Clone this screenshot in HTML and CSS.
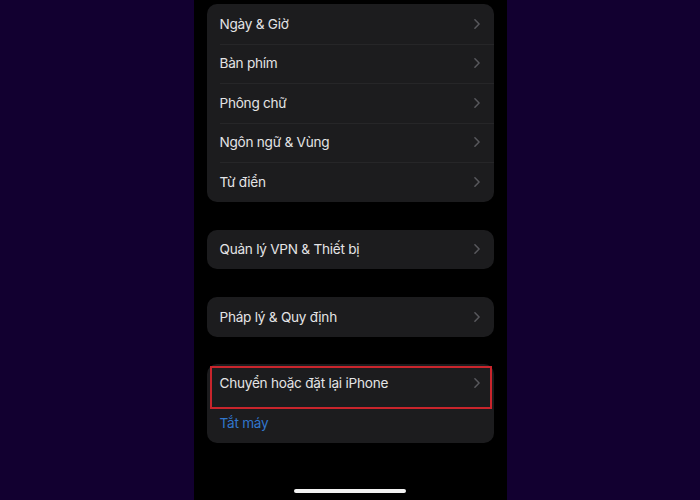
FILE: index.html
```html
<!DOCTYPE html>
<html lang="vi">
<head>
<meta charset="utf-8">
<link rel="stylesheet" href="styles.css">
</head>
<body>
<div class="phone">
  <div class="card card-first">
    <div class="row"><span class="label">Ngày &amp; Giờ</span><svg class="chev" viewBox="0 0 7 12"><path d="M1 1l5 5-5 5"/></svg></div>
    <div class="row"><span class="label">Bàn phím</span><svg class="chev" viewBox="0 0 7 12"><path d="M1 1l5 5-5 5"/></svg></div>
    <div class="row"><span class="label">Phông chữ</span><svg class="chev" viewBox="0 0 7 12"><path d="M1 1l5 5-5 5"/></svg></div>
    <div class="row"><span class="label">Ngôn ngữ &amp; Vùng</span><svg class="chev" viewBox="0 0 7 12"><path d="M1 1l5 5-5 5"/></svg></div>
    <div class="row"><span class="label">Từ điển</span><svg class="chev" viewBox="0 0 7 12"><path d="M1 1l5 5-5 5"/></svg></div>
  </div>
  <div class="card">
    <div class="row"><span class="label">Quản lý VPN &amp; Thiết bị</span><svg class="chev" viewBox="0 0 7 12"><path d="M1 1l5 5-5 5"/></svg></div>
  </div>
  <div class="card">
    <div class="row"><span class="label">Pháp lý &amp; Quy định</span><svg class="chev" viewBox="0 0 7 12"><path d="M1 1l5 5-5 5"/></svg></div>
  </div>
  <div class="card card-last">
    <div class="row"><span class="label">Chuyển hoặc đặt lại iPhone</span><svg class="chev" viewBox="0 0 7 12"><path d="M1 1l5 5-5 5"/></svg></div>
    <div class="row"><span class="label link">Tắt máy</span></div>
    <div class="highlight"></div>
  </div>
  <div class="spacer"></div>
  <div class="home-indicator"></div>
</div>
</body>
</html>
```

FILE: styles.css
```css
html, body {
  margin: 0;
  padding: 0;
  height: 100%;
}
body {
  background: #120030;
  display: flex;
  justify-content: center;
  font-family: Inter, "Noto Sans", "Liberation Sans", sans-serif;
  overflow: hidden;
}
.phone {
  width: 313px;
  height: 500px;
  background: #000;
  display: flex;
  flex-direction: column;
  padding: 4px 13px 0;
  box-sizing: border-box;
  gap: 28px;
}
.card {
  background: #1c1c1e;
  border-radius: 10px;
  position: relative;
  display: flex;
  flex-direction: column;
}
.card-last {
  margin-top: -1px;
}
.row {
  height: 39.5px;
  display: flex;
  align-items: center;
  justify-content: space-between;
  padding: 0 14px 0 13px;
  position: relative;
  flex: none;
}
.row + .row::before {
  content: "";
  position: absolute;
  top: 0;
  left: 13px;
  right: 0;
  height: 1px;
  background: #262628;
}
.card-last .row + .row::before {
  display: none;
}
.label {
  color: #e4e4e6;
  font-size: 13.6px;
  letter-spacing: -0.25px;
}
.link {
  color: #3176cc;
}
.chev {
  width: 6px;
  height: 10px;
  fill: none;
  stroke: #58585d;
  stroke-width: 1.8;
  stroke-linecap: round;
  stroke-linejoin: round;
}
.highlight {
  position: absolute;
  left: 3px;
  top: 2px;
  width: 282px;
  height: 43px;
  border: 2px solid #c9252c;
  box-sizing: border-box;
  pointer-events: none;
}
.spacer {
  flex: 1;
}
.home-indicator {
  align-self: center;
  width: 112px;
  height: 4px;
  border-radius: 2px;
  background: #f2f2f2;
  margin-bottom: 7px;
  margin-top: -28px;
}
```
